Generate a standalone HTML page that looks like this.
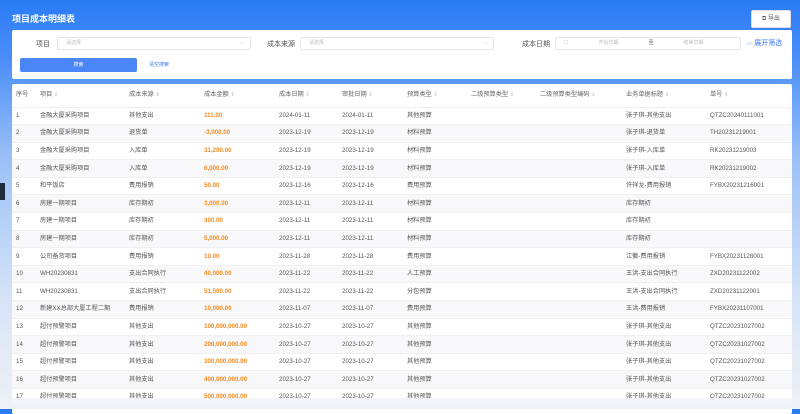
<!DOCTYPE html><html><head><meta charset="utf-8"><style>
*{margin:0;padding:0;box-sizing:border-box}
body{width:800px;height:409px;overflow:hidden;font-family:"Liberation Sans","Noto Sans CJK SC",sans-serif;background:linear-gradient(180deg,#2a7bf5 0px,#4b8ff7 60px,#9cc1f7 160px,#d6e4f7 300px,#eef1f6 409px);position:relative;color:#555}
.t{position:absolute;left:12px;top:12px;color:#fff;font-size:9px;font-weight:bold}
.exp{position:absolute;left:751px;top:10px;width:40px;height:18px;background:#fff;border:1px solid #dde;border-radius:2px;font-size:6px;color:#555;line-height:16px;text-align:center}
.card{position:absolute;left:12px;background:#fff;border-radius:2px}
.lbl{position:absolute;font-size:7px;color:#555}
.inp{position:absolute;height:13px;border:1px solid #e6e6ea;border-radius:2px;font-size:5px;color:#bbb;line-height:11px;padding-left:8px}
.btn{position:absolute;left:8px;top:28px;width:117px;height:14px;background:#4a86f5;border-radius:2px;color:#fff;font-size:5px;text-align:center;line-height:14px}
table{border-collapse:collapse;width:780px;font-size:6.2px;table-layout:fixed}
td{height:17.6px;max-height:17.6px;white-space:nowrap;overflow:hidden;padding:0;vertical-align:middle;line-height:8px}
tr{height:17.6px}
tr.h,tr.h td{height:23px;color:#666}
tr:nth-child(odd):not(.h){background:#f8f8fa}
tr td{border-bottom:1px solid #f0f0f3}
.o{color:#f58a1f;font-weight:bold}
.s{color:#bbb;font-size:5px}
</style></head><body>
<div class="t">项目成本明细表</div>
<div class="exp">⧉ 导出</div>
<div style="position:absolute;left:0;top:183px;width:5px;height:17px;background:#1f2c3d"></div>
<div class="card" style="top:30px;width:780px;height:49px">
<div class="lbl" style="left:24px;top:9px">项目</div>
<div class="inp" style="left:45px;top:7px;width:194px">请选择<span style="float:right;margin-right:6px">⌵</span></div>
<div class="lbl" style="left:255px;top:9px">成本来源</div>
<div class="inp" style="left:288px;top:7px;width:194px">请选择<span style="float:right;margin-right:6px">⌵</span></div>
<div class="lbl" style="left:510px;top:9px">成本日期</div>
<div class="inp" style="left:543px;top:7px;width:186px">☐<span style="margin-left:30px">开始日期</span><span style="margin-left:30px;color:#555">至</span><span style="margin-left:30px">结束日期</span></div>
<div class="lbl" style="left:735px;top:8px;color:#3a78f0">⌵ 展开筛选</div>
<div class="btn">搜索</div>
<div class="lbl" style="left:137px;top:31px;color:#3a78f0;font-size:5px">清空搜索</div>
</div>
<div class="card" style="top:84px;width:780px;height:330px;overflow:hidden">
<table>
<colgroup><col style="width:28px"><col style="width:89px"><col style="width:75px"><col style="width:75px"><col style="width:63px"><col style="width:65px"><col style="width:64px"><col style="width:69px"><col style="width:86px"><col style="width:84px"><col></colgroup>
<tr class="h"><td style="padding-left:4px">序号</td><td>项目 <span class="s">⇕</span></td><td>成本来源 <span class="s">⇕</span></td><td>成本金额 <span class="s">⇕</span></td><td>成本日期 <span class="s">⇕</span></td><td>审批日期 <span class="s">⇕</span></td><td>预算类型 <span class="s">⇕</span></td><td>二级预算类型 <span class="s">⇕</span></td><td>二级预算类型编码 <span class="s">⇕</span></td><td>业务单据标题 <span class="s">⇕</span></td><td>单号 <span class="s">⇕</span></td></tr>
<tr><td style="padding-left:4px">1</td><td>金融大厦采购项目</td><td>其他支出</td><td class="o">111.00</td><td>2024-01-11</td><td>2024-01-11</td><td>其他预算</td><td></td><td></td><td>张子琪-其他支出</td><td>QTZC20240111001</td></tr>
<tr><td style="padding-left:4px">2</td><td>金融大厦采购项目</td><td>退货单</td><td class="o">-3,000.00</td><td>2023-12-19</td><td>2023-12-19</td><td>材料预算</td><td></td><td></td><td>张子琪-退货单</td><td>TH20231219001</td></tr>
<tr><td style="padding-left:4px">3</td><td>金融大厦采购项目</td><td>入库单</td><td class="o">31,200.00</td><td>2023-12-19</td><td>2023-12-19</td><td>材料预算</td><td></td><td></td><td>张子琪-入库单</td><td>RK20231219003</td></tr>
<tr><td style="padding-left:4px">4</td><td>金融大厦采购项目</td><td>入库单</td><td class="o">6,000.00</td><td>2023-12-19</td><td>2023-12-19</td><td>材料预算</td><td></td><td></td><td>张子琪-入库单</td><td>RK20231219002</td></tr>
<tr><td style="padding-left:4px">5</td><td>和平饭店</td><td>费用报销</td><td class="o">50.00</td><td>2023-12-16</td><td>2023-12-16</td><td>费用预算</td><td></td><td></td><td>许祥龙-费用报销</td><td>FYBX20231216001</td></tr>
<tr><td style="padding-left:4px">6</td><td>房建一期项目</td><td>库存期初</td><td class="o">3,000.00</td><td>2023-12-11</td><td>2023-12-11</td><td>材料预算</td><td></td><td></td><td>库存期初</td><td></td></tr>
<tr><td style="padding-left:4px">7</td><td>房建一期项目</td><td>库存期初</td><td class="o">300.00</td><td>2023-12-11</td><td>2023-12-11</td><td>材料预算</td><td></td><td></td><td>库存期初</td><td></td></tr>
<tr><td style="padding-left:4px">8</td><td>房建一期项目</td><td>库存期初</td><td class="o">5,000.00</td><td>2023-12-11</td><td>2023-12-11</td><td>材料预算</td><td></td><td></td><td>库存期初</td><td></td></tr>
<tr><td style="padding-left:4px">9</td><td>公司备货项目</td><td>费用报销</td><td class="o">10.00</td><td>2023-11-28</td><td>2023-11-28</td><td>费用预算</td><td></td><td></td><td>江徽-费用报销</td><td>FYBX20231128001</td></tr>
<tr><td style="padding-left:4px">10</td><td>WH20230831</td><td>支出合同执行</td><td class="o">40,000.00</td><td>2023-11-22</td><td>2023-11-22</td><td>人工预算</td><td></td><td></td><td>王洪-支出合同执行</td><td>ZXD20231122002</td></tr>
<tr><td style="padding-left:4px">11</td><td>WH20230831</td><td>支出合同执行</td><td class="o">51,500.00</td><td>2023-11-22</td><td>2023-11-22</td><td>分包预算</td><td></td><td></td><td>王洪-支出合同执行</td><td>ZXD20231122001</td></tr>
<tr><td style="padding-left:4px">12</td><td>新建XX总部大厦工程二期</td><td>费用报销</td><td class="o">10,000.00</td><td>2023-11-07</td><td>2023-11-07</td><td>费用预算</td><td></td><td></td><td>王洪-费用报销</td><td>FYBX20231107001</td></tr>
<tr><td style="padding-left:4px">13</td><td>超付预警项目</td><td>其他支出</td><td class="o">100,000,000.00</td><td>2023-10-27</td><td>2023-10-27</td><td>其他预算</td><td></td><td></td><td>张子琪-其他支出</td><td>QTZC20231027002</td></tr>
<tr><td style="padding-left:4px">14</td><td>超付预警项目</td><td>其他支出</td><td class="o">200,000,000.00</td><td>2023-10-27</td><td>2023-10-27</td><td>其他预算</td><td></td><td></td><td>张子琪-其他支出</td><td>QTZC20231027002</td></tr>
<tr><td style="padding-left:4px">15</td><td>超付预警项目</td><td>其他支出</td><td class="o">300,000,000.00</td><td>2023-10-27</td><td>2023-10-27</td><td>其他预算</td><td></td><td></td><td>张子琪-其他支出</td><td>QTZC20231027002</td></tr>
<tr><td style="padding-left:4px">16</td><td>超付预警项目</td><td>其他支出</td><td class="o">400,000,000.00</td><td>2023-10-27</td><td>2023-10-27</td><td>其他预算</td><td></td><td></td><td>张子琪-其他支出</td><td>QTZC20231027002</td></tr>
<tr><td style="padding-left:4px">17</td><td>超付预警项目</td><td>其他支出</td><td class="o">500,000,000.00</td><td>2023-10-27</td><td>2023-10-27</td><td>其他预算</td><td></td><td></td><td>张子琪-其他支出</td><td>QTZC20231027002</td></tr>
</table>
</div>
<div style="position:absolute;left:0;top:398px;width:800px;height:11px;background:linear-gradient(180deg,rgba(238,241,246,.7),#eef1f6)"></div>
</body></html>
